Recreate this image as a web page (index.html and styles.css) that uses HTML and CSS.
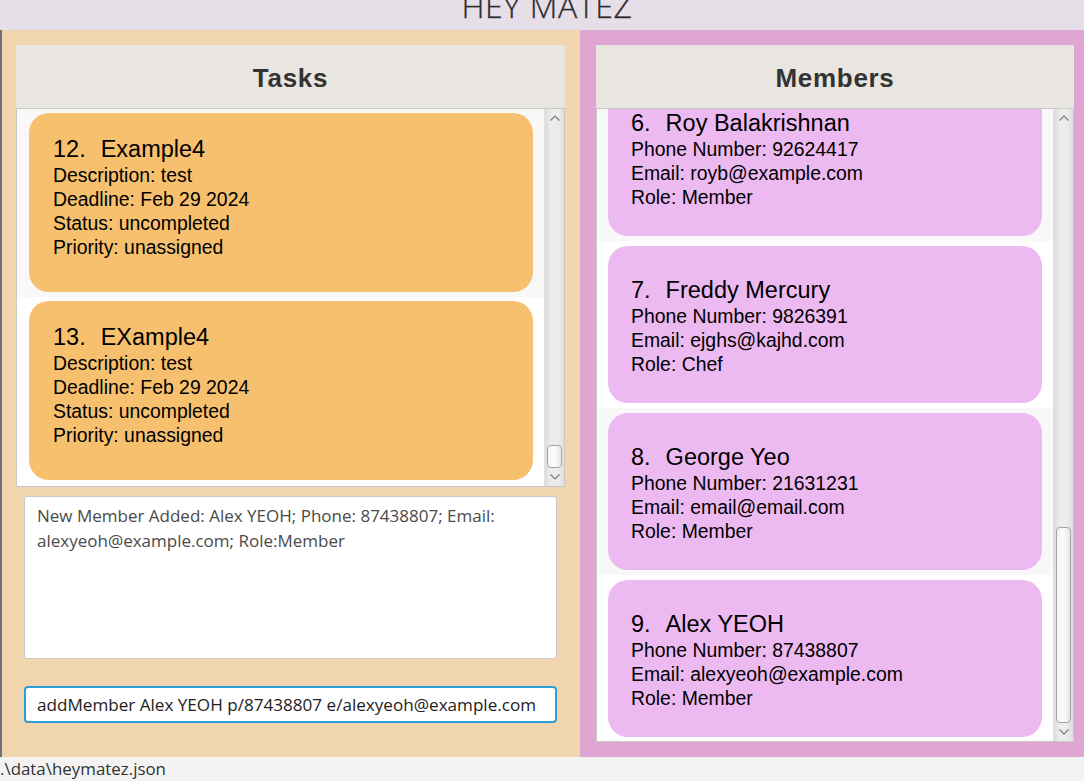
FILE: index.html
```html
<!DOCTYPE html>
<html>
<head>
<meta charset="utf-8">
<link rel="stylesheet" href="styles.css">
</head>
<body>
<div class="app">
  <div class="titlebar"><span class="title">HEY MATEZ</span></div>
  <div class="main">
    <section class="pane pane-tasks">
      <div class="pane-header">Tasks</div>
      <div class="list list-tasks">
        <div class="list-body">
          <div class="cells">
            <div class="cell cell-odd">
              <div class="card card-task">
                <div class="card-title"><span class="card-id">12.</span><span>Example4</span></div>
                <div class="card-line">Description: test</div>
                <div class="card-line">Deadline: Feb 29 2024</div>
                <div class="card-line">Status: uncompleted</div>
                <div class="card-line">Priority: unassigned</div>
              </div>
            </div>
            <div class="cell cell-even">
              <div class="card card-task">
                <div class="card-title"><span class="card-id">13.</span><span>EXample4</span></div>
                <div class="card-line">Description: test</div>
                <div class="card-line">Deadline: Feb 29 2024</div>
                <div class="card-line">Status: uncompleted</div>
                <div class="card-line">Priority: unassigned</div>
              </div>
            </div>
          </div>
        </div>
        <div class="vscroll">
          <div class="arrow"><svg width="12" height="8" viewBox="0 0 12 8"><path d="M1.5 6.5 L6 2 L10.5 6.5" fill="none" stroke="#7a7a7a" stroke-width="1.2"/></svg></div>
          <div class="track"><div class="thumb" style="height:23px"></div></div>
          <div class="arrow"><svg width="12" height="8" viewBox="0 0 12 8"><path d="M1.5 1.5 L6 6 L10.5 1.5" fill="none" stroke="#7a7a7a" stroke-width="1.2"/></svg></div>
        </div>
      </div>
      <div class="result">New Member Added: Alex YEOH; Phone: 87438807; Email: alexyeoh@example.com; Role:Member</div>
      <div class="command">addMember Alex YEOH p/87438807 e/alexyeoh@example.com</div>
    </section>
    <section class="pane pane-members">
      <div class="pane-header">Members</div>
      <div class="list list-members">
        <div class="list-body">
          <div class="cells cells-scrolled">
            <div class="cell cell-odd">
              <div class="card card-member">
                <div class="card-title"><span class="card-id">6.</span><span>Roy Balakrishnan</span></div>
                <div class="card-line">Phone Number: 92624417</div>
                <div class="card-line">Email: royb@example.com</div>
                <div class="card-line">Role: Member</div>
              </div>
            </div>
            <div class="cell cell-even">
              <div class="card card-member">
                <div class="card-title"><span class="card-id">7.</span><span>Freddy Mercury</span></div>
                <div class="card-line">Phone Number: 9826391</div>
                <div class="card-line">Email: ejghs@kajhd.com</div>
                <div class="card-line">Role: Chef</div>
              </div>
            </div>
            <div class="cell cell-odd">
              <div class="card card-member">
                <div class="card-title"><span class="card-id">8.</span><span>George Yeo</span></div>
                <div class="card-line">Phone Number: 21631231</div>
                <div class="card-line">Email: email@email.com</div>
                <div class="card-line">Role: Member</div>
              </div>
            </div>
            <div class="cell cell-even">
              <div class="card card-member">
                <div class="card-title"><span class="card-id">9.</span><span>Alex YEOH</span></div>
                <div class="card-line">Phone Number: 87438807</div>
                <div class="card-line">Email: alexyeoh@example.com</div>
                <div class="card-line">Role: Member</div>
              </div>
            </div>
          </div>
        </div>
        <div class="vscroll">
          <div class="arrow"><svg width="12" height="8" viewBox="0 0 12 8"><path d="M1.5 6.5 L6 2 L10.5 6.5" fill="none" stroke="#7a7a7a" stroke-width="1.2"/></svg></div>
          <div class="track"><div class="thumb" style="height:196px"></div></div>
          <div class="arrow"><svg width="12" height="8" viewBox="0 0 12 8"><path d="M1.5 1.5 L6 6 L10.5 1.5" fill="none" stroke="#7a7a7a" stroke-width="1.2"/></svg></div>
        </div>
      </div>
    </section>
  </div>
  <div class="statusbar">.\data\heymatez.json</div>
</div>
</body>
</html>
```

FILE: styles.css
```css
* { box-sizing: border-box; }
html, body { margin: 0; padding: 0; }
body {
  width: 1084px;
  height: 781px;
  overflow: hidden;
  font-family: "Liberation Sans", Arial, sans-serif;
  background: #f3f3f3;
}
.app { display: flex; flex-direction: column; height: 781px; }

.titlebar {
  height: 30px;
  background: #e6dfe8;
  overflow: hidden;
  display: flex;
  justify-content: center;
  flex: none;
}
.title {
  font-family: "Open Sans", "Liberation Sans", sans-serif;
  font-weight: 300;
  font-size: 32px;
  line-height: 32px;
  color: #2e2e2e;
  margin-top: -10px;
  padding-left: 10px;
  letter-spacing: 0.6px;
  -webkit-text-stroke: 0.3px #2e2e2e;
}

.main { display: flex; height: 727px; flex: none; }

.pane { display: flex; flex-direction: column; }
.pane-tasks {
  width: 580px;
  background: #f1d5ae;
  border-left: 2px solid #6f7277;
  padding: 15px 15px 0 14px;
}
.pane-members {
  width: 504px;
  background: #dfa5d3;
  padding: 15px 10px 0 16px;
}

.pane-header {
  height: 63px;
  background: #e9e5e1;
  display: flex;
  align-items: center;
  justify-content: center;
  font-weight: bold;
  font-size: 26px;
  letter-spacing: 0.7px;
  color: #333;
  padding-top: 4px;
}

.list {
  display: flex;
  border: 1px solid #c8c8c8;
  background: #fff;
}
.list-tasks { height: 379px; }
.list-members { height: 634px; }
.list-body { flex: 1; overflow: hidden; }
.cells-scrolled { margin-top: -35px; }

.cell-odd { background: #f8f8f8; }
.cell-even { background: #fff; }

.list-tasks .cell { padding: 4px 11px 5px 12px; }
.list-members .cell { padding: 5px 11px 5px 11px; }

.card {
  border-radius: 20px;
  color: #000;
}
.card-task { background: #f6c06f; height: 179px; padding: 22px 24px 0 24px; }
.card-member { background: #edb9f1; height: 157px; padding: 30px 23px 0 23px; }

.card-title { font-size: 23.5px; line-height: 28px; }
.card-id { margin-right: 15px; }
.card-line { font-size: 19.4px; line-height: 24px; }

.vscroll {
  width: 20px;
  flex: none;
  display: flex;
  flex-direction: column;
  background: linear-gradient(to right, #dcdcdc, #ececec 30%, #ececec 70%, #dedede);
  border-left: 1px solid #e2e2e2;
}
.arrow {
  height: 18px;
  display: flex;
  align-items: center;
  justify-content: center;
  flex: none;
}
.track {
  flex: 1;
  display: flex;
  flex-direction: column;
  justify-content: flex-end;
  padding: 0 2px;
}
.thumb {
  border: 1px solid #a4a4a4;
  border-radius: 4px;
  background: linear-gradient(to right, #f4f4f4, #fcfcfc 50%, #e6e6e6);
}

.result {
  margin: 9px 8px 0 8px;
  height: 163px;
  background: #fff;
  border: 1px solid #c8c8c8;
  border-radius: 3px;
  padding: 6px 12px;
  font-family: "Open Sans", "Noto Sans", sans-serif;
  font-size: 17px;
  line-height: 25px;
  color: #4a4a4a;
}

.command {
  margin: 27px 8px 0 8px;
  height: 37px;
  background: #fff;
  border: 2px solid #2a9fd6;
  border-radius: 4px;
  padding: 0 11px;
  display: flex;
  align-items: center;
  font-family: "Open Sans", "Noto Sans", sans-serif;
  font-size: 17.1px;
  color: #222;
  white-space: nowrap;
}

.statusbar {
  height: 24px;
  background: #f3f3f3;
  font-family: "Open Sans", "Noto Sans", sans-serif;
  font-size: 16.9px;
  line-height: 24px;
  color: #333;
  padding-left: 0;
  flex: none;
}
```
